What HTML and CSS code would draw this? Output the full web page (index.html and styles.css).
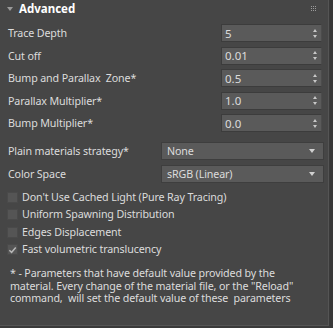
FILE: index.html
```html
<!DOCTYPE html>
<html>
<head>
<meta charset="utf-8">
<link rel="stylesheet" href="styles.css">
</head>
<body>
<div class="panel">
  <div class="header">
    <span class="caret"></span>
    <span class="title">Advanced</span>
    <svg class="grip" width="6" height="5" viewBox="0 0 6 5"><g fill="#9a9a9a"><rect x="0" y="0" width="1" height="1"/><rect x="2" y="0" width="1" height="1"/><rect x="4" y="0" width="1" height="1"/><rect x="0" y="2" width="1" height="1"/><rect x="2" y="2" width="1" height="1"/><rect x="4" y="2" width="1" height="1"/><rect x="0" y="4" width="1" height="1"/><rect x="2" y="4" width="1" height="1"/><rect x="4" y="4" width="1" height="1"/></g></svg>
  </div>
  <div class="spins">
    <div class="row"><span class="label">Trace Depth</span><div class="spin"><span>5</span><i class="arrows"></i></div></div>
    <div class="row"><span class="label">Cut off</span><div class="spin"><span>0.01</span><i class="arrows"></i></div></div>
    <div class="row"><span class="label">Bump and Parallax&nbsp; Zone*</span><div class="spin"><span>0.5</span><i class="arrows"></i></div></div>
    <div class="row"><span class="label">Parallax Multiplier*</span><div class="spin"><span>1.0</span><i class="arrows"></i></div></div>
    <div class="row"><span class="label">Bump Multiplier*</span><div class="spin"><span>0.0</span><i class="arrows"></i></div></div>
  </div>
  <div class="drops">
    <div class="row"><span class="label">Plain materials strategy*</span><div class="drop"><span>None</span><i class="down"></i></div></div>
    <div class="row"><span class="label">Color Space</span><div class="drop"><span>sRGB (Linear)</span><i class="down"></i></div></div>
  </div>
  <div class="checks">
    <label class="check"><span class="box"></span>Don't Use Cached Light (Pure Ray Tracing)</label>
    <label class="check"><span class="box"></span>Uniform Spawning Distribution</label>
    <label class="check"><span class="box"></span>Edges Displacement</label>
    <label class="check"><span class="box on"><svg width="10" height="10" viewBox="0 0 10 10"><path d="M1.5 5.2 L4 7.6 L8.6 2.2" fill="none" stroke="#b8b8b8" stroke-width="1.6"/></svg></span>Fast volumetric translucency</label>
  </div>
  <p class="note">* - Parameters that have default value provided by the material. Every change of the material file, or the "Reload" command,&nbsp; will set the default value of these&nbsp; parameters</p>
</div>
</body>
</html>
```
FILE: styles.css
```css
html, body {
  margin: 0;
  padding: 0;
  background: #3a3a3a;
}
body {
  width: 333px;
  height: 328px;
  overflow: hidden;
  font-family: "Noto Sans", "Open Sans", sans-serif;
  font-size: 10.7px;
  letter-spacing: -0.13px;
  color: #dcdcdc;
}
.panel {
  width: 329px;
  height: 326px;
  background: #464646;
  border-right: 1px solid #555;
  border-bottom: 1px solid #555;
  box-sizing: border-box;
}
.header {
  height: 24px;
  display: flex;
  align-items: flex-start;
  padding: 2px 8px 0 7px;
  box-sizing: border-box;
}
.caret {
  width: 0;
  height: 0;
  border-left: 3.5px solid transparent;
  border-right: 3.5px solid transparent;
  border-top: 4px solid #9a9a9a;
  margin-top: 5px;
  margin-right: 6px;
}
.title {
  font-weight: bold;
  color: #fff;
  font-size: 11.5px;
  line-height: 14px;
  letter-spacing: 0;
  flex: 1;
}
.grip {
  margin-top: 4px;
  margin-right: 3px;
}
.spins {
  display: flex;
  flex-direction: column;
  gap: 4.5px;
}
.row {
  display: flex;
  align-items: center;
  justify-content: space-between;
  height: 18px;
  padding-left: 8px;
}
.label {
  line-height: 18px;
  white-space: nowrap;
}
.spin {
  width: 101px;
  height: 18px;
  margin-right: 6px;
  background: #5a5a5a;
  border: 1px solid #3c3c3c;
  border-right-color: #4c4c4c;
  box-sizing: border-box;
  display: flex;
  align-items: center;
  justify-content: space-between;
  padding: 0 3px 0 3px;
  font-size: 11.5px;
  letter-spacing: 0;
}
.arrows {
  width: 5px;
  height: 9px;
  position: relative;
}
.arrows::before, .arrows::after {
  content: "";
  position: absolute;
  left: 0;
  border-left: 2.5px solid transparent;
  border-right: 2.5px solid transparent;
}
.arrows::before {
  top: 0;
  border-bottom: 3px solid #c8c8c8;
}
.arrows::after {
  bottom: 0;
  border-top: 3px solid #c8c8c8;
}
.drops {
  display: flex;
  flex-direction: column;
  gap: 5px;
  margin-top: 9.5px;
}
.drop {
  width: 163px;
  height: 18px;
  margin-right: 4px;
  background: #5a5a5a;
  border: 1px solid #3e3e3e;
  box-sizing: border-box;
  display: flex;
  align-items: center;
  justify-content: space-between;
  padding: 0 8px 0 5px;
}
.down {
  width: 0;
  height: 0;
  border-left: 3px solid transparent;
  border-right: 3px solid transparent;
  border-top: 4px solid #d0d0d0;
}
.checks {
  display: flex;
  flex-direction: column;
  gap: 6.5px;
  margin-top: 9px;
  padding-left: 7px;
}
.check {
  display: flex;
  align-items: center;
  height: 11px;
  line-height: 11px;
  white-space: nowrap;
}
.box {
  width: 11px;
  height: 11px;
  background: #555;
  border: 1px solid #4a4a4a;
  box-sizing: border-box;
  margin-right: 4px;
  display: flex;
  align-items: center;
  justify-content: center;
  flex: none;
}
.box svg {
  display: block;
}
.note {
  margin: 12px 0 0 10px;
  width: 310px;
  line-height: 12.5px;
}
```
